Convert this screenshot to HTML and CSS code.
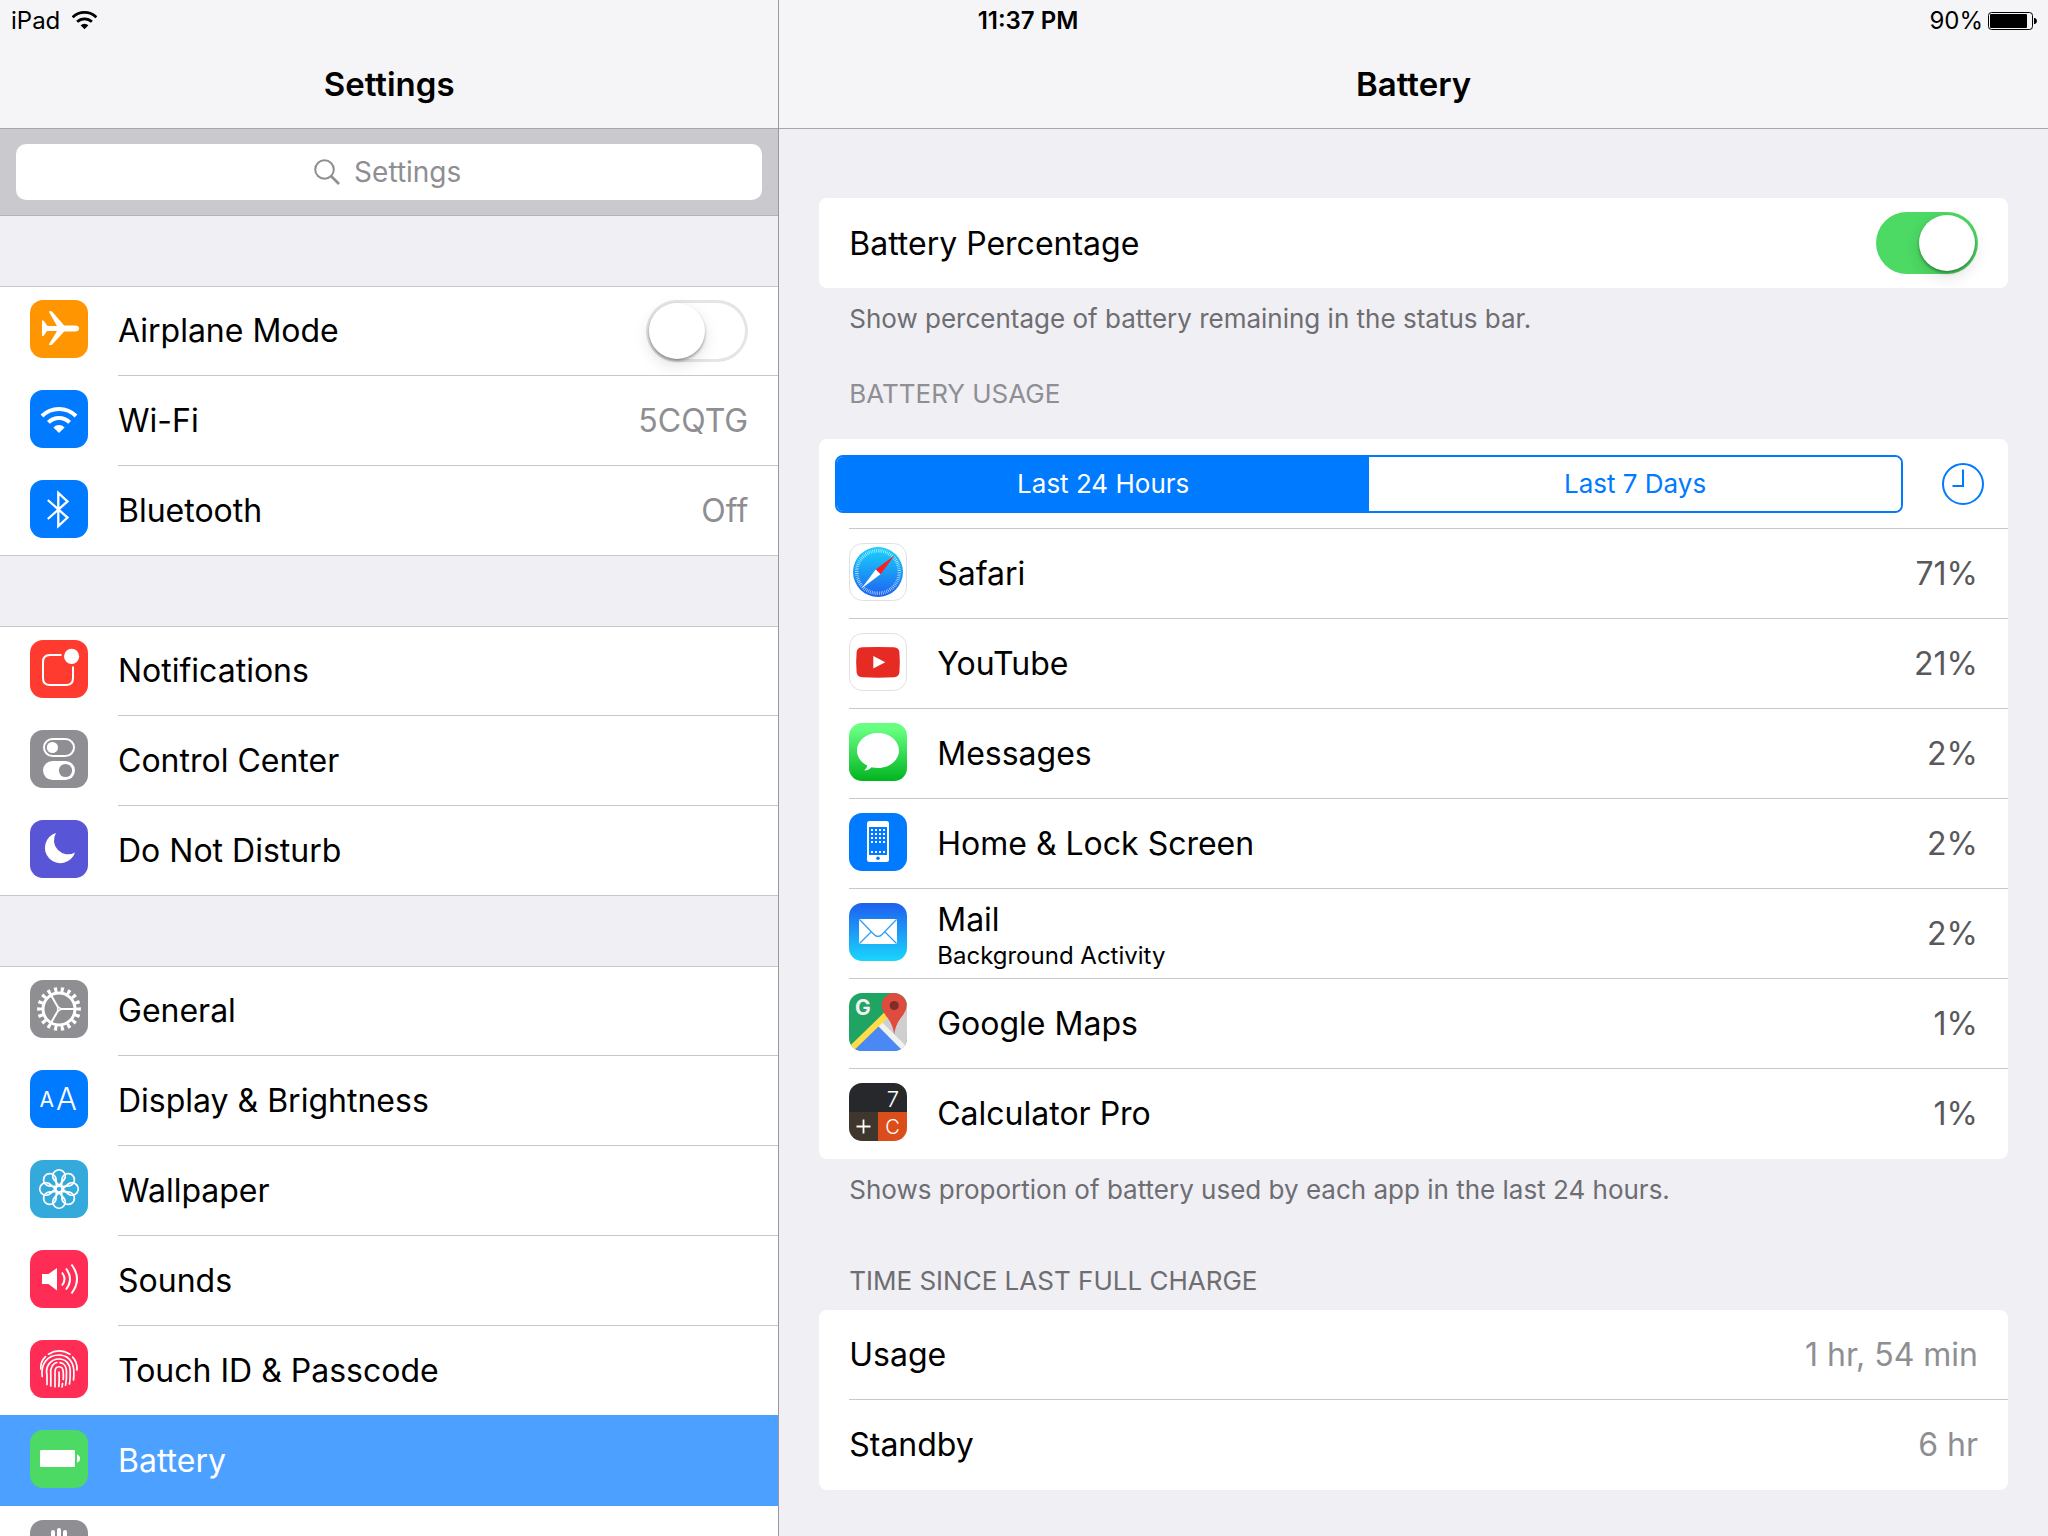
FILE: index.html
```html
<!DOCTYPE html>
<html lang="en">
<head>
    <meta charset="UTF-8">
    <meta name="viewport" content="width=device-width, initial-scale=1.0">
    <title>Settings - Battery</title>
    <link rel="stylesheet" href="styles.css">
</head>
<body>
    <div class="status-bar">
        <div class="status-left">
            <span>iPad</span>
            <svg class="status-wifi" viewBox="11 17 36 27">
                <path d="M12 26a24 24 0 0 1 34 0M18.4 32.4a15 15 0 0 1 21.2 0" fill="none" stroke="#000" stroke-width="4"/>
                <path d="M29 43l-5.6-5.6a8 8 0 0 1 11.2 0z"/>
            </svg>
        </div>
        <div class="status-time">11:37 PM</div>
        <div class="status-right">
            <span>90%</span>
            <svg class="status-battery" viewBox="0 0 49 18">
                <rect x="0.5" y="0.5" width="44" height="17" rx="3" fill="none" stroke="#000"/>
                <rect x="2" y="2" width="37" height="14" rx="1"/>
                <path d="M46 6h1q2 1 2 3t-2 3h-1z"/>
            </svg>
        </div>
    </div>

    <div class="split">
        <aside class="sidebar">
            <header class="title-bar"><h1>Settings</h1></header>
            <div class="search-bar">
                <label class="search-field">
                    <svg class="search-icon" viewBox="0 0 26 26" fill="none" stroke="#8e8e93" stroke-width="2">
                        <circle cx="10.5" cy="10.5" r="9.3"/>
                        <path d="M17 17l8 8" stroke-width="2.6"/>
                    </svg>
                    <input type="text" placeholder="Settings" aria-label="Search settings">
                </label>
            </div>

            <nav>
                <div class="group">
                    <label class="row">
                        <svg class="icon" viewBox="0 0 58 58">
                            <rect width="58" height="58" rx="13" fill="#ff9500"/>
                            <path fill="#fff" d="M12 20.5h1.5l4 5.5H27L19 12v-.8h2.8L34.2 25.6H45q4 0 4 2.9t-4 2.9H34.2L21.8 45H19v-.8L27 31H17l-3.5 5H12z"/>
                        </svg>
                        <span class="cell">
                            <span class="name">Airplane Mode</span>
                            <input class="switch" type="checkbox" role="switch">
                        </span>
                    </label>
                    <a class="row" href="#wifi">
                        <svg class="icon" viewBox="0 0 58 58">
                            <rect width="58" height="58" rx="13" fill="#007aff"/>
                            <path d="M12 26a24 24 0 0 1 34 0M18.4 32.4a15 15 0 0 1 21.2 0" fill="none" stroke="#fff" stroke-width="4"/>
                            <path fill="#fff" d="M29 43l-5.6-5.6a8 8 0 0 1 11.2 0z"/>
                        </svg>
                        <span class="cell"><span class="name">Wi-Fi</span><span class="value">5CQTG</span></span>
                    </a>
                    <a class="row" href="#bluetooth">
                        <svg class="icon" viewBox="0 0 58 58">
                            <rect width="58" height="58" rx="13" fill="#007aff"/>
                            <path fill="none" stroke="#fff" stroke-width="2.3" d="M17.8 20l19.7 17.6-9.2 8.6V12.8l9.2 8.6L17.8 39"/>
                        </svg>
                        <span class="cell"><span class="name">Bluetooth</span><span class="value">Off</span></span>
                    </a>
                </div>

                <div class="group">
                    <a class="row" href="#notifications">
                        <svg class="icon" viewBox="0 0 58 58">
                            <rect width="58" height="58" rx="13" fill="#ff3b30"/>
                            <path fill="none" stroke="#fff" stroke-width="2" d="M31.5 15H20q-7 0-7 7v16q0 7 7 7h16q7 0 7-7V26.5"/>
                            <circle cx="41.6" cy="16.4" r="7.6" fill="#fff"/>
                        </svg>
                        <span class="cell"><span class="name">Notifications</span></span>
                    </a>
                    <a class="row" href="#control-center">
                        <svg class="icon" viewBox="0 0 58 58">
                            <rect width="58" height="58" rx="13" fill="#8e8e93"/>
                            <rect x="14" y="9" width="30" height="17" rx="8.5" fill="none" stroke="#fff" stroke-width="2"/>
                            <circle cx="22.4" cy="17.5" r="5.6" fill="#fff"/>
                            <rect x="13" y="31" width="32" height="19" rx="9.5" fill="#fff"/>
                            <circle cx="35.5" cy="40.5" r="6.6" fill="#8e8e93"/>
                        </svg>
                        <span class="cell"><span class="name">Control Center</span></span>
                    </a>
                    <a class="row" href="#do-not-disturb">
                        <svg class="icon" viewBox="0 0 58 58">
                            <rect width="58" height="58" rx="13" fill="#5856d6"/>
                            <path fill="#fff" d="M26 13A15.4 15.4 0 1 0 45 32.4A14 14 0 0 1 26 13z"/>
                        </svg>
                        <span class="cell"><span class="name">Do Not Disturb</span></span>
                    </a>
                </div>

                <div class="group">
                    <a class="row" href="#general">
                        <svg class="icon" viewBox="0 0 58 58">
                            <rect width="58" height="58" rx="13" fill="#8e8e93"/>
                            <g fill="none" stroke="#fff">
                                <circle cx="29" cy="29" r="16" stroke-width="3"/>
                                <circle cx="29" cy="29" r="19.3" stroke-width="5.2" pathLength="180" stroke-dasharray="4.6 5.4" stroke-dashoffset="2.3"/>
                                <path stroke-width="2" d="M31 29h13M28 27.3l-6.5-11.2M28 30.7l-6.5 11.2"/>
                                <path stroke-width="1.5" d="M31.5 29l-3.8 2.2v-4.4z"/>
                            </g>
                        </svg>
                        <span class="cell"><span class="name">General</span></span>
                    </a>
                    <a class="row" href="#display">
                        <svg class="icon" viewBox="0 0 58 58">
                            <rect width="58" height="58" rx="13" fill="#007aff"/>
                            <text x="9.5" y="37" font-size="21" fill="#fff">A</text>
                            <text x="26" y="40" font-size="31" font-weight="300" fill="#fff">A</text>
                        </svg>
                        <span class="cell"><span class="name">Display &amp; Brightness</span></span>
                    </a>
                    <a class="row" href="#wallpaper">
                        <svg class="icon" viewBox="0 0 58 58">
                            <rect width="58" height="58" rx="13" fill="#34aadc"/>
                            <g transform="translate(29 29)" fill="none" stroke="#fff" stroke-width="1.8">
                                <circle r="3.2"/>
                                <g id="petals">
                                    <path id="petal" d="M0-3.5L-5.2-9.6A6.2 6.2 0 1 1 5.2-9.6z"/>
                                    <use href="#petal" transform="rotate(90)"/>
                                    <use href="#petal" transform="rotate(180)"/>
                                    <use href="#petal" transform="rotate(270)"/>
                                </g>
                                <use href="#petals" transform="rotate(45)"/>
                            </g>
                        </svg>
                        <span class="cell"><span class="name">Wallpaper</span></span>
                    </a>
                    <a class="row" href="#sounds">
                        <svg class="icon" viewBox="0 0 58 58">
                            <rect width="58" height="58" rx="13" fill="#ff2d55"/>
                            <path fill="#fff" d="M12 24h6.5L27 18v22.5L18.5 34H12z"/>
                            <path fill="none" stroke="#fff" stroke-width="2" d="M32 22.5q5 6.5 0 13M36 18.5q8 10.5 0 21M41.5 14.5q11 14.5 0 29"/>
                        </svg>
                        <span class="cell"><span class="name">Sounds</span></span>
                    </a>
                    <a class="row before-selected" href="#touch-id">
                        <svg class="icon" viewBox="0 0 58 58">
                            <rect width="58" height="58" rx="13" fill="#ff2d55"/>
                            <g fill="none" stroke="#fff" stroke-width="1.7" stroke-linecap="round">
                                <path d="M18.5 14.2Q29 7.5 40 14.2"/>
                                <path d="M15.5 16.7Q10.3 21.7 10.8 29"/>
                                <path d="M42.7 17.2Q47.5 22.2 47 30"/>
                                <path d="M12.2 36.5C10.5 24 17.5 15 29 15c7 0 14 4.5 14.8 15q.3 6-.3 10"/>
                                <path d="M17 44.5V35c-2-9 4-16 12-16 7 0 11 5 11.2 12q.2 8-.7 13"/>
                                <path d="M20.8 46V34c-1-6 2.5-11 6-11.5M30 22.6c4 .4 6.5 4 6.5 9q.2 8-.9 13.5"/>
                                <path d="M25 46.7V32c0-7 8-7 8.2 0q.4 4 0 7.5M32.5 43.5l-.4 3.5"/>
                                <path d="M29 32q.4 9-.2 14.5"/>
                            </g>
                        </svg>
                        <span class="cell"><span class="name">Touch ID &amp; Passcode</span></span>
                    </a>
                    <a class="row selected" href="#battery" aria-current="page">
                        <svg class="icon" viewBox="0 0 58 58">
                            <rect width="58" height="58" rx="13" fill="#4cd964"/>
                            <rect x="10" y="20" width="35" height="17" rx="1" fill="#fff"/>
                            <path fill="#fff" d="M47 24.5q3 1 3 4t-3 4z"/>
                        </svg>
                        <span class="cell"><span class="name">Battery</span></span>
                    </a>
                    <a class="row" href="#privacy" aria-label="Privacy">
                        <svg class="icon" viewBox="0 0 58 58">
                            <rect width="58" height="58" rx="13" fill="#8e8e93"/>
                            <path fill="none" stroke="#fff" stroke-width="4" stroke-linecap="round" d="M23 12v16M29 10v18M35 12v16M41 18v14"/>
                            <path fill="#fff" d="M21 26h22v10q-2 13-12 13-6 0-10-7l-7-10q2-3 7 2z"/>
                        </svg>
                    </a>
                </div>
            </nav>
        </aside>

        <main class="detail">
            <header class="title-bar"><h2>Battery</h2></header>

            <div class="detail-body">
                <label class="card row">
                    <span class="name">Battery Percentage</span>
                    <input class="switch" type="checkbox" role="switch" checked>
                </label>
                <p class="note">Show percentage of battery remaining in the status bar.</p>

                <h3 class="heading usage-heading">BATTERY USAGE</h3>
                <div class="card">
                    <div class="toolbar">
                        <div class="segments">
                            <button class="segment active" type="button" aria-pressed="true">Last 24 Hours</button>
                            <button class="segment" type="button" aria-pressed="false">Last 7 Days</button>
                        </div>
                        <button class="clock" type="button" aria-label="Show time">
                            <svg viewBox="0 0 42 42" width="42" height="42" fill="none" stroke="#007aff" stroke-width="2">
                                <circle cx="21" cy="21" r="20"/>
                                <path d="M21 6.5V23H10.5"/>
                            </svg>
                        </button>
                    </div>
                    <ul class="apps">
                        <li class="row">
                            <svg class="icon" viewBox="0 0 58 58">
                                <defs>
                                    <linearGradient id="safari" x2="0" y2="1"><stop stop-color="#19d3fc"/><stop offset="1" stop-color="#1e61f0"/></linearGradient>
                                </defs>
                                <rect x="0.5" y="0.5" width="57" height="57" rx="13" fill="#fff" stroke="#e0e0e2"/>
                                <circle cx="29" cy="29" r="25" fill="url(#safari)"/>
                                <circle cx="29" cy="29" r="21.3" fill="none" stroke="#fff" stroke-opacity=".8" stroke-width="3.4" pathLength="216" stroke-dasharray="1 2"/>
                                <path fill="#ff1d1d" d="M45.5 12.5L31.5 31.3 26.7 26.5z"/>
                                <path fill="#fff" d="M12.5 45.5L26.7 26.5 31.5 31.3z"/>
                            </svg>
                            <span class="cell"><span class="name">Safari</span><span class="percent">71%</span></span>
                        </li>
                        <li class="row">
                            <svg class="icon" viewBox="0 0 58 58">
                                <rect x="0.5" y="0.5" width="57" height="57" rx="13" fill="#fff" stroke="#e0e0e2"/>
                                <path fill="#e62a24" d="M13 14.3q16-.8 32 0 5 .3 5.4 5 .9 10 0 20-.4 4.700-5.400 5-16 .8-32 0-5-.3-5.400-5-.9-10 0-20 .4-4.700 5.400-5z"/>
                                <path fill="#fff" d="M24.3 23l12 6.3-12 6.3z"/>
                            </svg>
                            <span class="cell"><span class="name">YouTube</span><span class="percent">21%</span></span>
                        </li>
                        <li class="row">
                            <svg class="icon" viewBox="0 0 58 58">
                                <defs>
                                    <linearGradient id="messages" x2="0" y2="1"><stop offset=".1" stop-color="#67ff81"/><stop offset="1" stop-color="#01b41f"/></linearGradient>
                                </defs>
                                <rect width="58" height="58" rx="13" fill="url(#messages)"/>
                                <path fill="#fff" d="M29 10c11.6 0 21 7.8 21 17.5S40.6 45 29 45q-3.5 0-6.5-.8-3 3.3-7.3 3.3 2.8-2.2 3-5C12 39.5 8 34 8 27.5 8 17.8 17.4 10 29 10z"/>
                            </svg>
                            <span class="cell"><span class="name">Messages</span><span class="percent">2%</span></span>
                        </li>
                        <li class="row">
                            <svg class="icon" viewBox="0 0 58 58">
                                <rect width="58" height="58" rx="13" fill="#007aff"/>
                                <rect x="18" y="8" width="22" height="41" rx="2.5" fill="#fff"/>
                                <rect x="20" y="14" width="18" height="28" fill="#007aff"/>
                                <path fill="none" stroke="#fff" stroke-width="2" stroke-dasharray="2 2" d="M22 17h14M22 21h14M22 25h14M22 29h14M22 39h14"/>
                                <circle cx="29" cy="45.2" r="1.8" fill="#007aff"/>
                            </svg>
                            <span class="cell"><span class="name">Home &amp; Lock Screen</span><span class="percent">2%</span></span>
                        </li>
                        <li class="row">
                            <svg class="icon" viewBox="0 0 58 58">
                                <defs>
                                    <linearGradient id="mail" x2="0" y2="1"><stop stop-color="#1e5ff0"/><stop offset="1" stop-color="#19d6fd"/></linearGradient>
                                </defs>
                                <rect width="58" height="58" rx="13" fill="url(#mail)"/>
                                <rect x="10" y="16" width="38" height="25" rx="1" fill="#fff"/>
                                <path fill="none" stroke="#2b9df5" stroke-width="1.2" d="M10.5 16.5L25 31.5q4 4 8 0L47.5 16.5M10.5 40.5L22 29M47.5 40.5L36 29"/>
                            </svg>
                            <span class="cell">
                                <span class="name stacked">Mail<small>Background Activity</small></span>
                                <span class="percent">2%</span>
                            </span>
                        </li>
                        <li class="row">
                            <svg class="icon" viewBox="0 0 58 58">
                                <clipPath id="maps"><rect width="58" height="58" rx="13"/></clipPath>
                                <g clip-path="url(#maps)">
                                    <rect width="58" height="58" fill="#1fa463"/>
                                    <path fill="#cfcfcf" d="M29 34L44 16l14-4v46H50z"/>
                                    <path fill="#4a89f3" d="M29.5 33L4 58h50z"/>
                                    <path fill="none" stroke="#f1f1f1" stroke-width="5.5" d="M29 29l29 29"/>
                                    <path fill="none" stroke="#ffdc48" stroke-width="6" d="M1 57l37-36"/>
                                    <path fill="#de4b3f" d="M45.2 41.5q-1-9-6.5-16.5-6-7-6-12.5a12.5 12.5 0 0 1 25 0q0 5.5-6 12.5-5.5 7.5-6.5 16.5z"/>
                                    <circle cx="45.2" cy="12.5" r="4.6" fill="#802d29"/>
                                </g>
                                <text x="6" y="22" font-size="21" font-weight="700" fill="#f1f1f1">G</text>
                            </svg>
                            <span class="cell"><span class="name">Google Maps</span><span class="percent">1%</span></span>
                        </li>
                        <li class="row">
                            <svg class="icon" viewBox="0 0 58 58">
                                <clipPath id="calc"><rect width="58" height="58" rx="13"/></clipPath>
                                <g clip-path="url(#calc)">
                                    <rect width="58" height="29" fill="#26282c"/>
                                    <rect y="29" width="29" height="29" fill="#3f362e"/>
                                    <rect x="29" y="29" width="29" height="29" fill="#db4e1b"/>
                                </g>
                                <path stroke="#fff" stroke-width="1.8" d="M7.5 43.5h14M14.5 36.5v14"/>
                                <text x="44" y="24" font-size="22" font-weight="300" text-anchor="middle" fill="#fff">7</text>
                                <text x="43.5" y="51" font-size="20" font-weight="300" text-anchor="middle" fill="#fff">C</text>
                            </svg>
                            <span class="cell"><span class="name">Calculator Pro</span><span class="percent">1%</span></span>
                        </li>
                    </ul>
                </div>
                <p class="note">Shows proportion of battery used by each app in the last 24 hours.</p>

                <h3 class="heading charge-heading">TIME SINCE LAST FULL CHARGE</h3>
                <dl class="card">
                    <div class="row"><div class="cell"><dt class="name">Usage</dt><dd class="value">1 hr, 54 min</dd></div></div>
                    <div class="row"><div class="cell"><dt class="name">Standby</dt><dd class="value">6 hr</dd></div></div>
                </dl>
            </div>
        </main>
    </div>
</body>
</html>
```
FILE: styles.css
```css
* {
    box-sizing: border-box;
}
body {
    margin: 0;
    height: 100vh;
    overflow: hidden;
    font-family: Inter, "Liberation Sans", sans-serif;
    font-size: 32px;
    color: #000;
    background: #efeff4;
}
h1, h2, h3, p, ul, dl, dd {
    margin: 0;
    padding: 0;
}
button, input {
    font-family: inherit;
}

/* Status bar, on top of both title bars */
.status-bar {
    position: absolute;
    top: 0;
    left: 0;
    right: 0;
    display: grid;
    grid-template-columns: 1fr auto 1fr;
    align-items: center;
    height: 41px;
    padding: 0 11px;
    font-size: 24px;
}
.status-left, .status-right {
    display: flex;
    align-items: center;
}
.status-left {
    gap: 12px;
}
.status-right {
    justify-content: flex-end;
    gap: 5px;
}
.status-time {
    padding-left: 8px;
    font-weight: 600;
}
.status-wifi {
    width: 25px;
    height: 19px;
}
.status-battery {
    width: 49px;
    height: 18px;
}

.split {
    display: grid;
    grid-template-columns: calc(38% + 1px) 1fr;
    height: 100%;
}
.title-bar {
    display: flex;
    align-items: center;
    justify-content: center;
    height: 129px;
    padding-top: 40px;
    background: #f5f5f7;
    border-bottom: 1px solid #a7a7aa;
}
.title-bar h1, .title-bar h2 {
    font-size: 33px;
    font-weight: 600;
}

/* Sidebar */
.sidebar {
    overflow: hidden;
    border-right: 1px solid #98989d;
}
.search-bar {
    padding: 15px 16px;
    background: #c9c9ce;
    border-bottom: 1px solid #b3b3b8;
}
.search-field {
    display: flex;
    align-items: center;
    justify-content: center;
    gap: 14px;
    height: 56px;
    background: #fff;
    border-radius: 10px;
}
.search-icon {
    width: 26px;
    height: 26px;
}
.search-field input {
    width: 110px;
    padding: 0;
    border: none;
    outline: none;
    background: none;
    font-size: 28px;
}
.search-field input::placeholder {
    color: #8e8e93;
}
.group {
    margin-top: 70px;
    background: #fff;
    box-shadow: inset 0 1px #c8c7cc, inset 0 -1px #c8c7cc;
}

/* Rows, shared by both panes */
.row {
    display: flex;
    align-items: center;
    height: 90px;
    padding-left: 30px;
    color: inherit;
    text-decoration: none;
}
.cell {
    flex: 1;
    display: flex;
    align-items: center;
    justify-content: space-between;
    align-self: stretch;
    padding-right: 30px;
    border-bottom: 1px solid #c8c7cc;
}
.row:last-child .cell {
    border-color: transparent;
}
.icon {
    width: 58px;
    height: 58px;
    margin: 0 30px 4px 0;
}
.value {
    color: #8e8e93;
}
.percent {
    color: #59595b;
}
.before-selected .cell {
    border-color: #4ca0ff;
}
.before-selected {
    background: linear-gradient(#4ca0ff, #4ca0ff) bottom / 100% 1px no-repeat;
}
.selected {
    color: #fff;
    background: #4ca0ff;
}
.selected .cell {
    border-color: #4ca0ff;
}

.switch {
    appearance: none;
    width: 102px;
    height: 62px;
    margin: 0;
    padding: 3px;
    border-radius: 31px;
    background: #fff;
    box-shadow: inset 0 0 0 3px #e5e5e5;
}
.switch::before {
    content: "";
    display: block;
    width: 56px;
    height: 56px;
    border-radius: 50%;
    background: #fff;
    box-shadow: 0 2px 3px rgba(0, 0, 0, 0.35), 0 6px 16px rgba(0, 0, 0, 0.12);
}
.switch:checked {
    background: #4cd964;
    box-shadow: none;
}
.switch:checked::before {
    margin-left: auto;
}

/* Battery pane */
.detail-body {
    padding: 69px 40px 0;
}
.card {
    background: #fff;
    border-radius: 8px;
}
label.card {
    justify-content: space-between;
    padding-right: 30px;
}
.note, .heading {
    padding: 0 30px;
    font-size: 26px;
    font-weight: 400;
    line-height: 32px;
    color: #6d6d72;
}
.note {
    margin-top: 15px;
}
.usage-heading {
    margin: 43px 0 29px;
    color: #8e8e93;
}
.charge-heading {
    margin: 59px 0 13px;
}
.toolbar {
    display: flex;
    align-items: center;
    gap: 39px;
    height: 90px;
    margin-left: 30px;
    padding-right: 24px;
    border-bottom: 1px solid #c8c7cc;
}
.segments {
    flex: 1;
    display: flex;
    height: 58px;
    margin-left: -14px;
    border: 2px solid #007aff;
    border-radius: 8px;
    overflow: hidden;
}
.segment {
    flex: 1;
    padding: 0;
    border: none;
    background: #fff;
    font-size: 26px;
    color: #007aff;
}
.segment.active {
    background: #007aff;
    color: #fff;
}
.clock {
    padding: 0;
    border: none;
    background: none;
}
.clock svg {
    display: block;
}
.apps {
    margin-left: 30px;
    list-style: none;
}
.apps .row {
    padding-left: 0;
    border-bottom: 1px solid #c8c7cc;
}
.apps .row:last-child {
    border-color: transparent;
}
.apps .cell {
    border-bottom: none;
}
.apps .icon {
    margin-bottom: 3px;
}
.stacked {
    padding-top: 4px;
}
.stacked small {
    display: block;
    font-size: 24px;
    line-height: 33px;
}
```
